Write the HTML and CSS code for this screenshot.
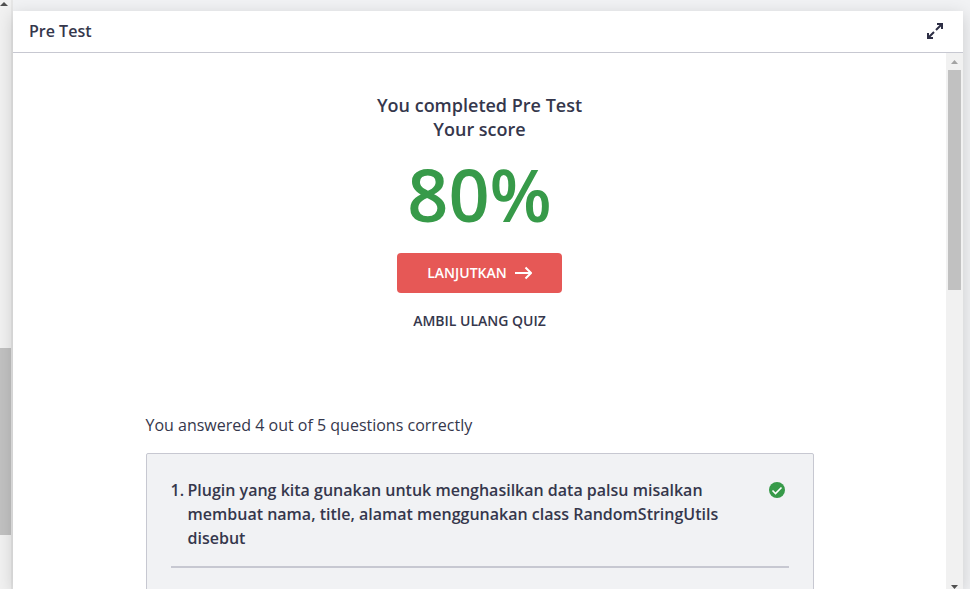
FILE: index.html
```html
<!DOCTYPE html>
<html lang="id">
<head>
<meta charset="utf-8">
<title>Pre Test</title>
<link rel="stylesheet" href="styles.css">
</head>
<body>
<div class="page-scroll" aria-hidden="true">
  <svg class="page-arrow" width="8" height="4" viewBox="0 0 8 4"><path d="M0 4h8L4 0z"/></svg>
  <div class="page-before"></div>
  <div class="page-thumb"></div>
  <div class="page-after"></div>
</div>
<main class="dialog">
  <header class="bar">
    <h1 class="bar-title">Pre Test</h1>
    <button class="expand" type="button" aria-label="Expand">
      <svg width="18" height="18" viewBox="0 0 18 18" fill="none" stroke="currentColor" stroke-width="2"><path d="M11 2H16v5M16 2L10 8M7 16H2v-5M2 16L8 10"/></svg>
    </button>
  </header>
  <div class="body">
    <div class="content">
      <section class="result">
        <h2 class="heading">You completed Pre Test<br>Your score</h2>
        <p class="score">80%</p>
        <button class="next" type="button">LANJUTKAN
          <svg width="17" height="14" viewBox="0 0 17 14" fill="none" stroke="currentColor" stroke-width="2"><path d="M0 7h16M10.500 1.500L16 7L10.500 12.500"/></svg>
        </button>
        <button class="retry" type="button">AMBIL ULANG QUIZ</button>
      </section>
      <section class="answers">
        <p class="summary">You answered 4 out of 5 questions correctly</p>
        <article class="card">
          <div class="question">
            <span class="number">1.</span>
            <p class="text">Plugin yang kita gunakan untuk menghasilkan data palsu misalkan membuat nama, title, alamat menggunakan class RandomStringUtils disebut</p>
            <svg class="correct" width="16" height="16" viewBox="0 0 16 16" role="img" aria-label="Correct"><circle cx="8" cy="8" r="8" fill="#379a49"/><path d="M3.500 8.500L6.500 11.500L12.500 5.500" fill="none" stroke="#fff" stroke-width="1.600"/></svg>
          </div>
        </article>
      </section>
    </div>
    <div class="scroll" aria-hidden="true">
      <svg class="up" width="7" height="4" viewBox="0 0 7 4"><path d="M0 4h7L3.500 0z"/></svg>
      <div class="thumb"></div>
      <svg class="down" width="7" height="4" viewBox="0 0 7 4"><path d="M0 0h7L3.500 4z"/></svg>
    </div>
  </div>
</main>
</body>
</html>
```

FILE: styles.css
```css
* { box-sizing: border-box; }

body {
  margin: 0;
  height: 100vh;
  display: flex;
  overflow: hidden;
  background: #f1f2f4;
  color: #35374c;
  font: 400 16px/24px "Open Sans", sans-serif;
}

h1, h2, p { margin: 0; }

button {
  border: 0;
  padding: 0;
  background: none;
  color: inherit;
  font: inherit;
  cursor: pointer;
}

svg { display: block; flex: none; }

.page-scroll {
  flex: none;
  width: 13px;
  display: flex;
  flex-direction: column;
  background: #f1f1f1;
  border-right: 2px solid #e6e6e6;
}

.page-arrow { margin-top: 2px; fill: #505050; }
.page-before { flex: 342; }
.page-thumb { flex: 187; background: #c1c1c1; }
.page-after { flex: 54; }

.dialog {
  flex: 1;
  min-width: 0;
  margin: 11px 7px 0 0;
  display: flex;
  flex-direction: column;
  background: #fff;
  box-shadow: 0 4px 16px rgba(0, 0, 0, 0.16);
}

.bar {
  flex: none;
  display: flex;
  align-items: center;
  justify-content: space-between;
  height: 42px;
  padding: 0 19px 2px 16px;
  border-bottom: 1px solid #c7c8d1;
}

.bar-title { font-size: 16px; font-weight: 600; }

.expand { color: #2d2f45; }

.body { flex: 1; min-height: 0; display: flex; }

.content { flex: 1; min-width: 0; overflow: hidden; }

.result {
  display: flex;
  flex-direction: column;
  align-items: center;
  padding-top: 40px;
}

.heading {
  font-size: 18px;
  line-height: 24px;
  font-weight: 600;
  text-align: center;
}

.score {
  margin: 8px 0 14px;
  color: #379a49;
  font-size: 72px;
  line-height: 90px;
  font-weight: 600;
}

.next {
  display: flex;
  align-items: center;
  justify-content: center;
  gap: 8px;
  width: 165px;
  height: 40px;
  border-radius: 4px;
  background: #e65856;
  color: #fff;
  font-size: 14px;
  font-weight: 600;
}

.retry {
  margin-top: 8px;
  height: 40px;
  font-size: 14px;
  font-weight: 600;
}

.answers {
  width: 668px;
  max-width: 100%;
  margin: 72px auto 0;
}

.card {
  height: 240px;
  margin-top: 16px;
  padding: 24px;
  border: 1px solid #c7c8d1;
  border-radius: 2px;
  background: #f1f2f4;
}

.question {
  display: flex;
  padding-bottom: 16px;
  border-bottom: 2px solid #c7c8d1;
  font-weight: 600;
}

.number { width: 17px; }
.text { flex: 1; padding-right: 32px; }
.correct { margin: 4px 4px 0 0; }

.scroll {
  flex: none;
  width: 17px;
  display: flex;
  flex-direction: column;
  align-items: center;
  background: #f1f1f1;
}

.up { margin: 7px 0 6px; fill: #a3a3a3; }
.thumb { width: 13px; height: 41%; background: #c1c1c1; }
.down { margin-top: auto; fill: #505050; }
```
